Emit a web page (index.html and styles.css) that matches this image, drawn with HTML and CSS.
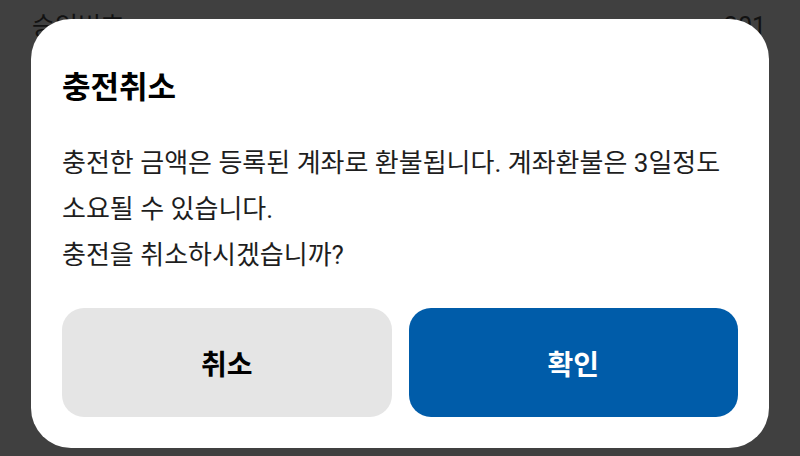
FILE: index.html
```html
<!DOCTYPE html>
<html lang="ko">
<head>
<meta charset="utf-8">
<link rel="stylesheet" href="styles.css">
</head>
<body>
<div class="page">
  <div class="row">
    <span class="label">승인번호</span>
    <span class="value">201</span>
  </div>
</div>
<div class="overlay">
  <div class="dialog">
    <h1 class="title">충전취소</h1>
    <p class="message">충전한 금액은 등록된 계좌로 환불됩니다. 계좌환불은 3일정도 소요될 수 있습니다.<br>충전을 취소하시겠습니까?</p>
    <div class="actions">
      <button class="btn btn-cancel">취소</button>
      <button class="btn btn-ok">확인</button>
    </div>
  </div>
</div>
</body>
</html>
```
FILE: styles.css
```css
* { box-sizing: border-box; }
html, body {
  margin: 0;
  padding: 0;
  width: 800px;
  height: 456px;
  overflow: hidden;
  background: #404040;
  font-family: Roboto, "Noto Sans CJK KR", sans-serif;
}
.page {
  padding: 12px 34px 0 32px;
}
.row {
  display: flex;
  justify-content: space-between;
  align-items: center;
  font-size: 25px;
  line-height: 30px;
  color: #121212;
}
.overlay {
  position: absolute;
  left: 31px;
  top: 19px;
}
.dialog {
  width: 738px;
  height: 429px;
  background: #ffffff;
  border-radius: 40px;
  padding: 48px 31px 31px 31px;
  display: flex;
  flex-direction: column;
}
.title {
  margin: 0;
  font-size: 31px;
  line-height: 42px;
  font-weight: 700;
  color: #000;
}
.message {
  margin: 31px 0 0 0;
  font-size: 26px;
  line-height: 46px;
  color: #1e1e1e;
}
.actions {
  margin-top: auto;
  display: grid;
  grid-template-columns: 1fr 1fr;
  gap: 17px;
}
.btn {
  height: 109px;
  border: none;
  border-radius: 22px;
  font-family: Roboto, "Noto Sans CJK KR", sans-serif;
  font-size: 28px;
  font-weight: 700;
  padding: 0;
}
.btn-cancel {
  background: #e5e5e5;
  color: #000;
}
.btn-ok {
  background: #005ca9;
  color: #fff;
}
```
